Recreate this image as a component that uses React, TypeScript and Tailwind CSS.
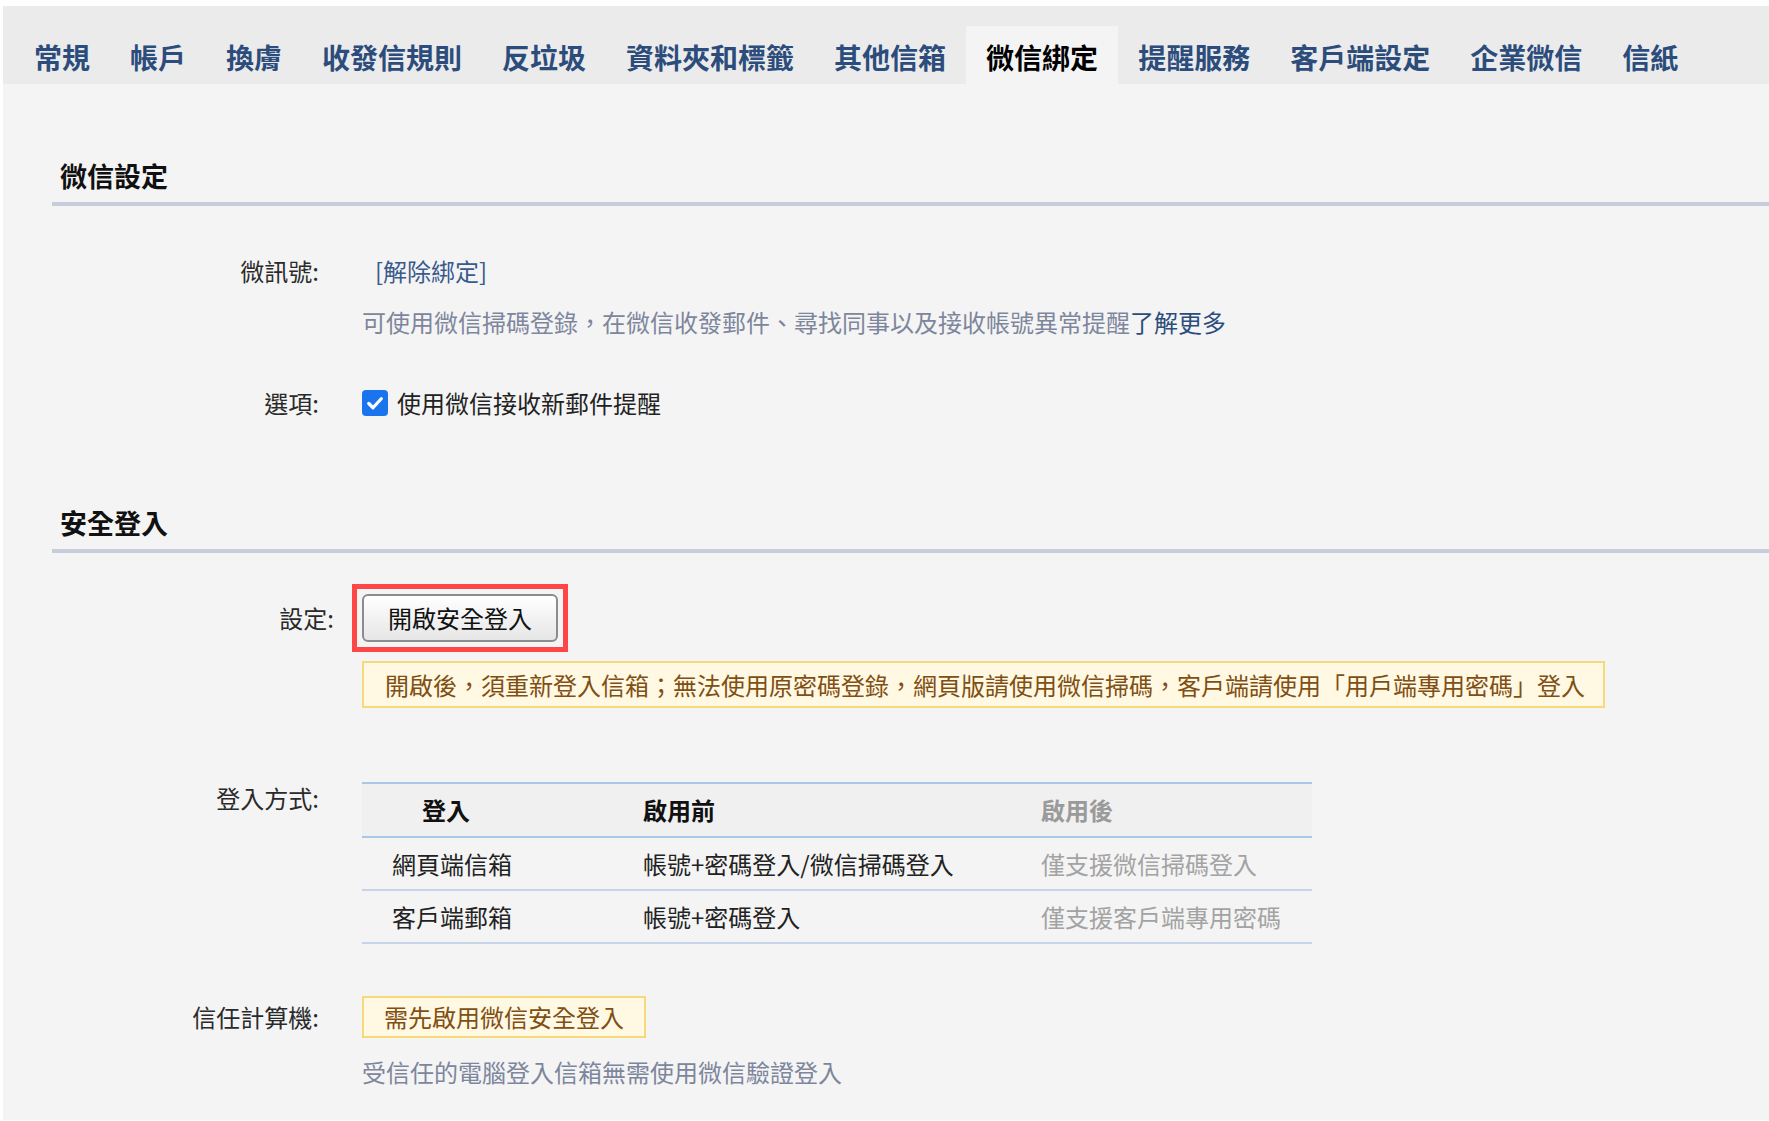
import clsx from "clsx";

const tabs = [
  "常規",
  "帳戶",
  "換膚",
  "收發信規則",
  "反垃圾",
  "資料夾和標籤",
  "其他信箱",
  "微信綁定",
  "提醒服務",
  "客戶端設定",
  "企業微信",
  "信紙",
];

const rows = [
  ["網頁端信箱", "帳號+密碼登入/微信掃碼登入", "僅支援微信掃碼登入"],
  ["客戶端郵箱", "帳號+密碼登入", "僅支援客戶端專用密碼"],
];

function SectionTitle({ children, className }: { children: string; className?: string }) {
  return (
    <div className={className}>
      <h2 className="pl-[8px] text-[27px] font-bold leading-[36px] text-[#111]">{children}</h2>
      <div className="mt-[8.5px] h-[4px] bg-[#c7cddb]" />
    </div>
  );
}

function Label({ children, className }: { children: string; className?: string }) {
  return (
    <div className={clsx("shrink-0 text-right text-[24px] leading-[32px] text-[#2a2a2a]", className ?? "w-[267px]")}>
      {children}
    </div>
  );
}

export default function App() {
  return (
    <div className="h-[1121px] overflow-hidden bg-white pb-[1px] pl-[3px] pt-[6px] font-['Noto_Sans_CJK_TC','Noto_Sans',sans-serif]">
      <div className="flex h-full flex-col bg-[#f4f4f4]">
        <nav className="flex h-[78px] shrink-0 items-end bg-[#ebebeb] pl-[11px]">
          {tabs.map((t) => (
            <div
              key={t}
              className={clsx(
                "flex h-[58px] items-center px-[20px] pt-[3px] text-[28px] font-bold leading-none",
                t === "微信綁定" ? "bg-[#f4f4f4] text-black" : "text-[#2c4d7c]"
              )}
            >
              {t}
            </div>
          ))}
        </nav>

        <main className="ml-[49px] text-[24px] leading-[32px]">
          <SectionTitle className="mt-[73.5px]">微信設定</SectionTitle>

          <div className="mt-[49px] flex">
            <Label>微訊號:</Label>
            <a className="ml-[56px] cursor-pointer text-[#3a5a8c]">[解除綁定]</a>
          </div>
          <div className="ml-[310px] mt-[18.5px] text-[#7d869c]">
            可使用微信掃碼登錄，在微信收發郵件、尋找同事以及接收帳號異常提醒
            <a className="cursor-pointer text-[#2c4d7c]">了解更多</a>
          </div>

          <div className="mt-[49.5px] flex items-center">
            <Label>選項:</Label>
            <div className="ml-[43px] flex items-center">
              <span className="flex h-[26px] w-[26px] items-center justify-center rounded-[4px] bg-[#1a74ee]">
                <svg viewBox="0 0 16 16" className="h-[20px] w-[20px]" fill="none">
                  <path d="M3 8.4 6.4 11.8 13 4.6" stroke="white" strokeWidth="2.6" strokeLinecap="round" strokeLinejoin="round" />
                </svg>
              </span>
              <span className="ml-[9px] text-[#222]">使用微信接收新郵件提醒</span>
            </div>
          </div>

          <SectionTitle className="mt-[85.5px]">安全登入</SectionTitle>

          <div className="mt-[31px] flex items-center">
            <Label className="w-[282px]">設定:</Label>
            <div className="ml-[18px] border-[5px] border-[#ff4646] p-[5px]">
              <button className="h-[48px] w-[196px] rounded-[6px] border-2 border-[#8c8c8c] bg-gradient-to-b from-white to-[#e6e6e6] text-[24px] text-[#111]">
                開啟安全登入
              </button>
            </div>
          </div>
          <div className="ml-[310px] mt-[9px] w-[1243px] whitespace-nowrap border-2 border-[#f7d97a] bg-[#fff8e2] pl-[21px] py-[5.5px] text-[#7f4f13]">
            開啟後，須重新登入信箱；無法使用原密碼登錄，網頁版請使用微信掃碼，客戶端請使用「用戶端專用密碼」登入
          </div>

          <div className="mt-[74px] flex items-start">
            <Label>登入方式:</Label>
            <div className="ml-[43px] w-[950px] border-t-2 border-[#a9c7e7]">
              <div className="grid h-[52px] grid-cols-[251px_398px_301px] items-center bg-[#f0f0f0] font-bold">
                <div className="pl-[60px] text-[#111]">登入</div>
                <div className="pl-[30px] text-[#111]">啟用前</div>
                <div className="pl-[30px] text-[#9a9a9a]">啟用後</div>
              </div>
              <div className="h-[2px] bg-[#a9c7e7]" />
              {rows.map((r) => (
                <div key={r[0]} className="grid h-[53px] grid-cols-[251px_398px_301px] items-center border-b-2 border-[#c6d6e8]">
                  <div className="pl-[30px] text-[#222]">{r[0]}</div>
                  <div className="pl-[30px] text-[#222]">{r[1]}</div>
                  <div className="pl-[30px] text-[#a3a3a3]">{r[2]}</div>
                </div>
              ))}
            </div>
          </div>

          <div className="mt-[52px] flex items-center">
            <Label>信任計算機:</Label>
            <div className="ml-[43px] border-2 border-[#f7d97a] bg-[#fff8e2] px-[20px] py-[3px] text-[#7f4f13]">
              需先啟用微信安全登入
            </div>
          </div>
          <div className="ml-[310px] mt-[18px] text-[#7d869c]">受信任的電腦登入信箱無需使用微信驗證登入</div>
        </main>
      </div>
    </div>
  );
}
